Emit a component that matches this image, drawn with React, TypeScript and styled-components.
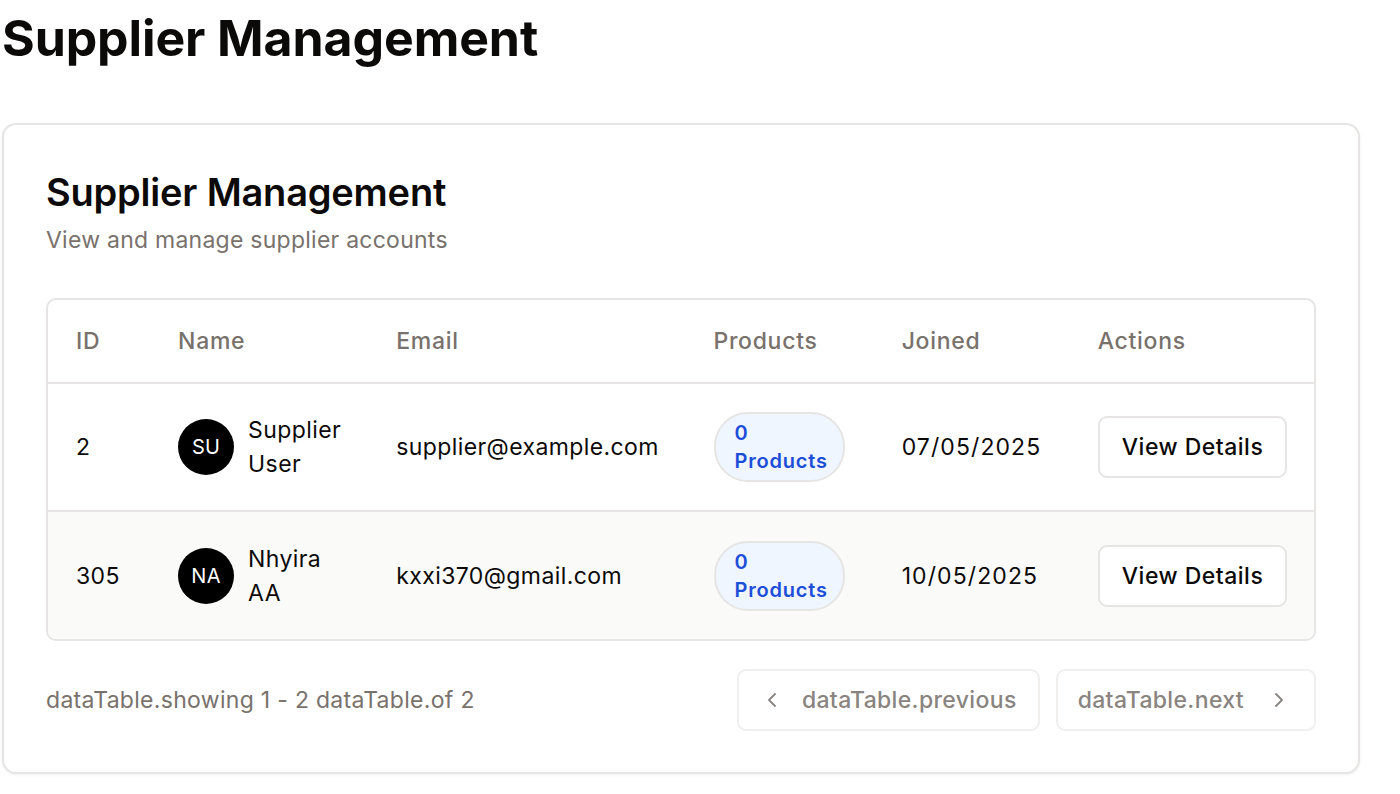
import React from "react";
import styled, { createGlobalStyle } from "styled-components";

const Global = createGlobalStyle`
  html, body { margin: 0; padding: 0; background: #ffffff; }
  body { font-family: Inter, "Noto Sans", sans-serif; color: #0c0a09; -webkit-font-smoothing: antialiased; }
  * { box-sizing: border-box; }
`;

const Page = styled.div`
  padding: 0 40px 20px 2px;
  width: 1400px;
`;

const PageTitle = styled.h1`
  margin: 0;
  padding-top: 8px;
  font-size: 50px;
  line-height: 60px;
  font-weight: 700;
  letter-spacing: -0.1px;
  color: #0c0a09;
`;

const Card = styled.section`
  margin-top: 55px;
  width: 1358px;
  border: 2px solid #e7e5e4;
  border-radius: 14px;
  background: #fff;
  box-shadow: 0 1px 3px rgba(0, 0, 0, 0.06);
  padding: 44px 42px 41px 42px;
`;

const CardTitle = styled.h2`
  margin: 0;
  font-size: 38px;
  line-height: 46px;
  font-weight: 600;
  letter-spacing: -0.2px;
`;

const CardSubtitle = styled.p`
  margin: 10px 0 0;
  font-size: 23px;
  line-height: 30px;
  letter-spacing: 0.25px;
  color: #78716c;
`;

const TableWrap = styled.div`
  margin-top: 43px;
  border: 2px solid #e7e5e4;
  border-radius: 10px;
  overflow: hidden;
`;

const Table = styled.table`
  width: 100%;
  border-collapse: collapse;
  table-layout: fixed;
  font-size: 23px;
  letter-spacing: 0.4px;
`;

const Th = styled.th`
  text-align: left;
  font-weight: 500;
  color: #78716c;
  height: 83px;
  padding: 0 28px;
  letter-spacing: 0.7px;
  border-bottom: 2px solid #e7e5e4;
`;

const Tr = styled.tr<{ $alt?: boolean }>`
  background: ${(p) => (p.$alt ? "#fafaf9" : "#ffffff")};
  &:not(:last-child) > td { border-bottom: 2px solid #e7e5e4; }
`;

const Td = styled.td<{ $wide?: boolean }>`
  height: 128px;
  padding: 0 28px;
  vertical-align: middle;
  color: #0c0a09;
  line-height: 34px;
  letter-spacing: ${(p) => (p.$wide ? "1.1px" : "inherit")};
`;

const NameCell = styled.div`
  display: flex;
  align-items: center;
  gap: 14px;
`;

const Avatar = styled.div`
  flex: 0 0 56px;
  width: 56px;
  height: 56px;
  border-radius: 50%;
  background: #000;
  color: #fff;
  display: flex;
  align-items: center;
  justify-content: center;
  font-size: 20px;
  letter-spacing: 0.3px;
`;

const Badge = styled.span`
  display: inline-block;
  width: 131px;
  padding: 5px 19px;
  border: 2px solid #e7e5e4;
  border-radius: 34px;
  background: #eff6ff;
  color: #1d4ed8;
  font-size: 20px;
  font-weight: 600;
  letter-spacing: 0.8px;
  line-height: 28px;
`;

const Button = styled.button`
  height: 62px;
  padding: 0 22px;
  border: 2px solid #e7e5e4;
  border-radius: 9px;
  background: #fff;
  font-family: inherit;
  font-size: 23px;
  letter-spacing: 0.5px;
  font-weight: 500;
  color: #0c0a09;
  white-space: nowrap;
`;

const Footer = styled.div`
  margin-top: 28px;
  display: flex;
  align-items: center;
  justify-content: space-between;
`;

const Showing = styled.span`
  font-size: 23px;
  letter-spacing: 0.3px;
  color: #78716c;
`;

const Pager = styled.div`
  display: flex;
  gap: 16px;
`;

const PageButton = styled.button<{ $iconEnd?: boolean }>`
  height: 62px;
  display: flex;
  align-items: center;
  gap: ${(p) => (p.$iconEnd ? "23px" : "18px")};
  padding: ${(p) => (p.$iconEnd ? "0 23px 0 20px" : "0 21px")};
  border: 2px solid #f0efee;
  border-radius: 9px;
  background: #fff;
  font-family: inherit;
  font-size: 23px;
  letter-spacing: 0.35px;
  font-weight: 500;
  color: #898480;
`;

const Chevron = ({ dir }: { dir: "left" | "right" }) => (
  <svg width="24" height="24" viewBox="0 0 24 24" fill="none" stroke="currentColor" strokeWidth="1.8" strokeLinecap="round" strokeLinejoin="round">
    {dir === "left" ? <path d="m15 18-6-6 6-6" /> : <path d="m9 18 6-6-6-6" />}
  </svg>
);

const rows = [
  { id: "2", initials: "SU", name: "Supplier User", email: "supplier@example.com", joined: "07/05/2025" },
  { id: "305", initials: "NA", name: "Nhyira AA", email: "kxxi370@gmail.com", joined: "10/05/2025" },
];

const widths = [102, 218, 317, 188, 196, 244];

export default function App() {
  return (
    <Page>
      <Global />
      <PageTitle>Supplier Management</PageTitle>
      <Card>
        <CardTitle>Supplier Management</CardTitle>
        <CardSubtitle>View and manage supplier accounts</CardSubtitle>
        <TableWrap>
          <Table>
            <colgroup>
              {widths.map((w, i) => (
                <col key={i} style={{ width: w }} />
              ))}
            </colgroup>
            <thead>
              <tr>
                <Th>ID</Th>
                <Th>Name</Th>
                <Th>Email</Th>
                <Th>Products</Th>
                <Th>Joined</Th>
                <Th>Actions</Th>
              </tr>
            </thead>
            <tbody>
              {rows.map((r, i) => (
                <Tr key={r.id} $alt={i === 1}>
                  <Td>{r.id}</Td>
                  <Td>
                    <NameCell>
                      <Avatar>{r.initials}</Avatar>
                      <span>{r.name}</span>
                    </NameCell>
                  </Td>
                  <Td>{r.email}</Td>
                  <Td>
                    <Badge>0 Products</Badge>
                  </Td>
                  <Td $wide>{r.joined}</Td>
                  <Td>
                    <Button>View Details</Button>
                  </Td>
                </Tr>
              ))}
            </tbody>
          </Table>
        </TableWrap>
        <Footer>
          <Showing>dataTable.showing 1 - 2 dataTable.of 2</Showing>
          <Pager>
            <PageButton>
              <Chevron dir="left" />
              dataTable.previous
            </PageButton>
            <PageButton $iconEnd>
              dataTable.next
              <Chevron dir="right" />
            </PageButton>
          </Pager>
        </Footer>
      </Card>
    </Page>
  );
}
